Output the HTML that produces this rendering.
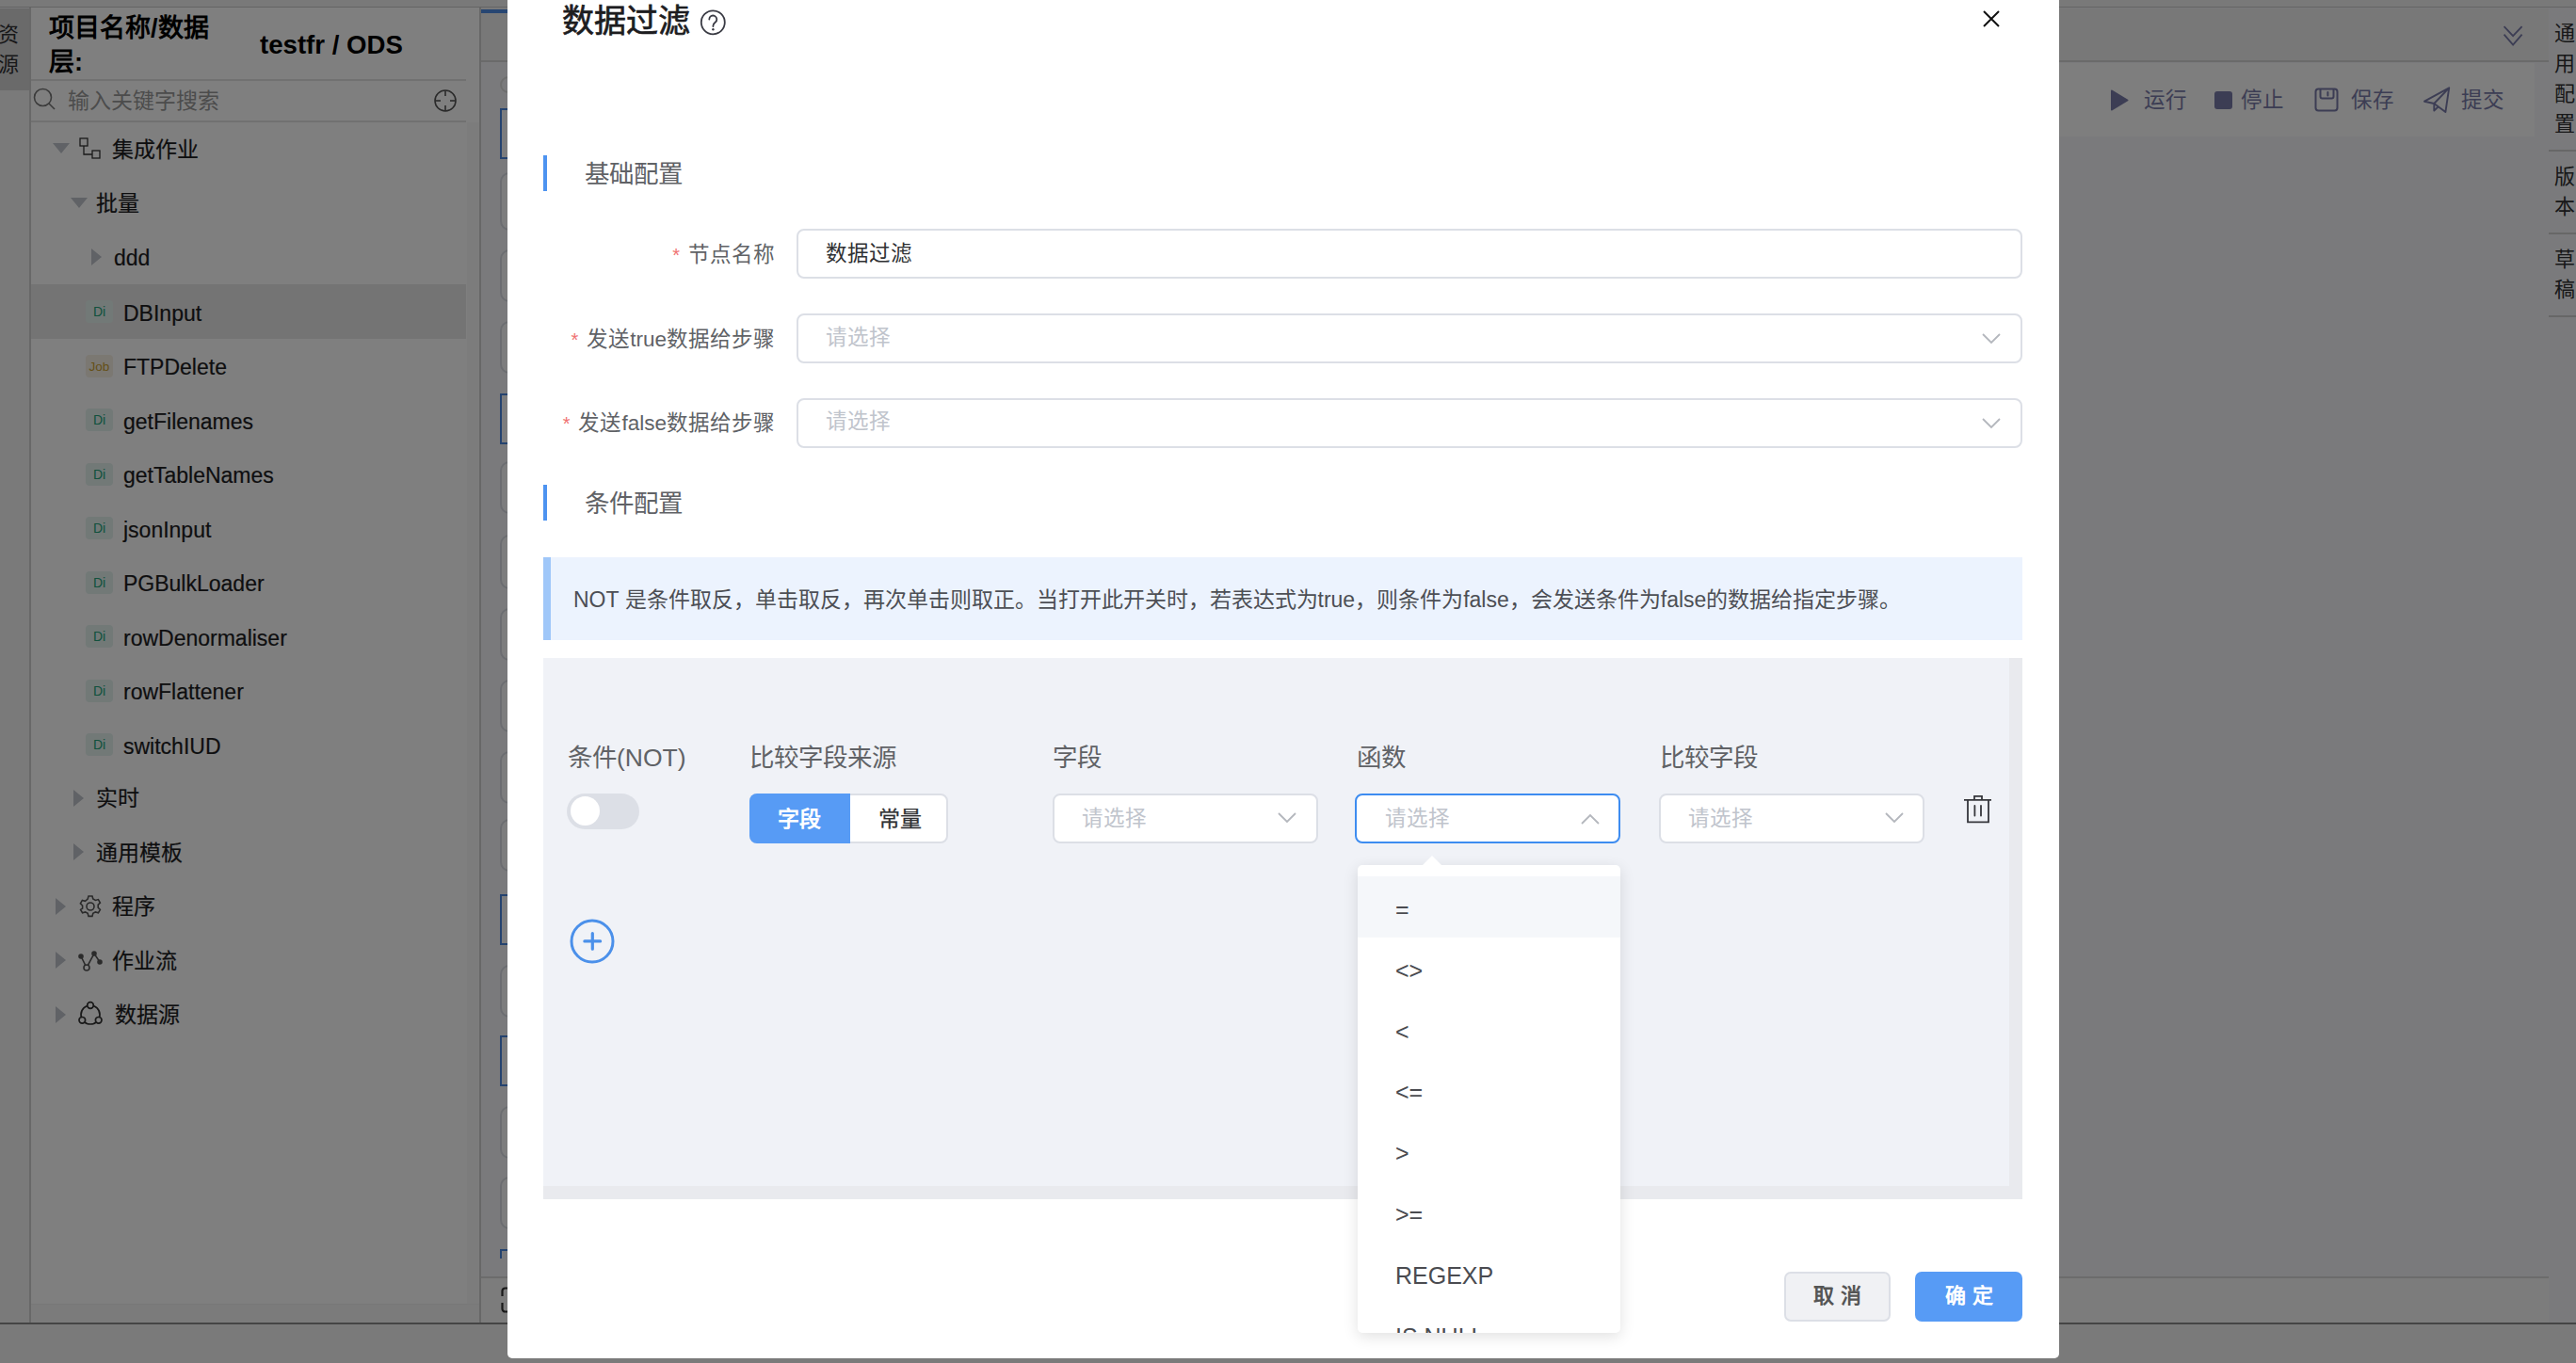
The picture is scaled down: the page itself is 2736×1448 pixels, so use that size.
<!DOCTYPE html>
<html lang="zh-CN"><head><meta charset="utf-8">
<style>
*{box-sizing:border-box;margin:0;padding:0}
html,body{width:2736px;height:1448px;overflow:hidden}
body{position:relative;font-family:"Liberation Sans",sans-serif;background:#f4f5f8;color:#303133}
.a{position:absolute;white-space:nowrap}
/* background app */
#top{left:0;top:0;width:2736px;height:8px;background:#f2f2f2;border-bottom:1px solid #c8c8c8}
#ltab{left:0;top:9px;width:31px;height:87px;background:#d4d4d4}
#lcol{left:0;top:96px;width:31px;height:1310px;background:#f4f4f4}
#side{left:31px;top:8px;width:480px;height:1398px;background:#fff;border-left:2px solid #d0d0d0;border-right:2px solid #cfcfcf}
#tree{left:33px;top:130px;width:462px;height:1257px;background:#fff}
#strack{left:496px;top:130px;width:13px;height:1276px;background:#f8f8f8}
.hl{background:#e9e9e9}
.tt{font-size:23px;line-height:30px;color:#1c1c1e;-webkit-text-stroke:0.2px #1c1c1e}
.tri{position:absolute;width:0;height:0}
.tri.d{border-left:9px solid transparent;border-right:9px solid transparent;border-top:11px solid #c0c4cc}
.tri.r{border-top:9px solid transparent;border-bottom:9px solid transparent;border-left:11px solid #c0c4cc}
.di{position:absolute;width:29px;height:24px;border-radius:4px;background:#e4f3ef;color:#22a27a;font-size:14px;line-height:25px;text-align:center}
.job{background:#f6f0e4;color:#caa030;font-size:13.5px}
#bottom{left:0;top:1405px;width:2736px;height:43px;background:#f4f4f4;border-top:2px solid #8a8a8a}
#main{left:511px;top:9px;width:2196px;height:1396px;background:#f4f5f8}
#tabbar{left:511px;top:9px;width:2196px;height:57px;background:#f1f1f1;border-bottom:2px solid #d4d4d4}
#toolbar{left:1000px;top:67px;width:1692px;height:78px;background:#fcfcfc}
#canvasb{left:511px;top:1356px;width:2196px;height:50px;background:#f8f8f8;border-top:2px solid #d8d8d8}
#rtabs{left:2707px;top:9px;width:29px;height:1396px;background:#f4f5f8}
.vt{font-size:22px;line-height:32px;color:#303133;width:30px;text-align:left}
.card{position:absolute;left:531px;width:60px;height:55px;border:2px solid #d8dbe3;border-radius:10px;background:#fafbfc}
.card.b{border-color:#4a86de;border-radius:0}
.tbt{font-size:22.5px;line-height:30px;color:#787aa8}
#overlay{left:0;top:0;width:2736px;height:1448px;background:rgba(0,0,0,.5)}
/* modal */
#modal{left:539px;top:-20px;width:1648px;height:1463px;background:#fff;border-radius:5px}
.sec{font-size:26.5px;line-height:38px;color:#606266}
.bar{position:absolute;width:4px;height:38px;background:#4d93f0}
.lbl{font-size:22.5px;line-height:30px;color:#606266;text-align:right}
.req{color:#f07272;margin-right:9px;font-size:20px}
.inp{position:absolute;left:846px;width:1302px;height:53px;border:2px solid #dcdfe6;border-radius:8px;background:#fff}
.ph{color:#c0c4cc}
.chev{position:absolute;width:20px;height:12px}
.clbl{font-size:26.5px;line-height:36px;color:#606266}
.sel{position:absolute;top:843px;width:282px;height:53px;border:2px solid #dcdfe6;border-radius:8px;background:#fff}
.it{position:absolute;left:1482px;font-size:25px;line-height:30px;color:#4a4b50}
</style></head><body>
<div class="a" id="top"></div>
<div class="a" id="ltab"></div>
<div class="a" id="lcol"></div>
<div class="a vt" style="left:-2px;top:21px;font-size:22px;line-height:32px">资<br>源</div>
<div class="a" id="side"></div>
<div class="a" id="strack"></div>
<div class="a" style="left:33px;top:1385px;width:476px;height:20px;background:#f7f7f7;border-top:1px solid #f0f0f0"></div>
<div class="a" style="left:33px;top:84px;width:462px;height:2px;background:#e2e2e2"></div>
<div class="a" style="left:33px;top:128px;width:462px;height:2px;background:#e2e2e2"></div>
<div class="a" style="left:52px;top:12px;font-size:27px;line-height:36px;font-weight:bold;color:#000">项目名称/数据<br>层:</div>
<div class="a" style="left:276px;top:30px;font-size:27.6px;line-height:36px;font-weight:bold;color:#000">testfr / ODS</div>
<!-- search -->
<svg class="a" style="left:35px;top:93px" width="26" height="26" viewBox="0 0 26 26"><circle cx="10.5" cy="10.5" r="9" fill="none" stroke="#777" stroke-width="1.6"/><line x1="17" y1="17" x2="23" y2="23" stroke="#777" stroke-width="1.6"/></svg>
<div class="a" style="left:72px;top:92px;font-size:23px;line-height:30px;color:#999">输入关键字搜索</div>
<svg class="a" style="left:460px;top:94px" width="26" height="26" viewBox="0 0 26 26"><circle cx="13" cy="13" r="11" fill="none" stroke="#555" stroke-width="1.6"/><line x1="13" y1="2" x2="13" y2="8" stroke="#555" stroke-width="1.6"/><line x1="13" y1="18" x2="13" y2="24" stroke="#555" stroke-width="1.6"/><line x1="2" y1="13" x2="8" y2="13" stroke="#555" stroke-width="1.6"/><line x1="18" y1="13" x2="24" y2="13" stroke="#555" stroke-width="1.6"/></svg>
<!-- tree -->
<div class="a hl" style="left:33px;top:302px;width:462px;height:58px"></div>
<div class="tri d" style="left:56px;top:152px"></div>
<svg class="a" style="left:84px;top:146px" width="24" height="25" viewBox="0 0 24 25" fill="none" stroke="#333" stroke-width="1.3"><rect x="1" y="1" width="8" height="8"/><rect x="14" y="14" width="8" height="8"/><path d="M5 9v9h9"/></svg>
<div class="a tt" style="left:119px;top:144px">集成作业</div>
<div class="tri d" style="left:75px;top:210px"></div>
<div class="a tt" style="left:102px;top:201px">批量</div>
<div class="tri r" style="left:97px;top:264px"></div>
<div class="a tt" style="left:121px;top:259px">ddd</div>
<div class="di" style="left:91px;top:319px">Di</div><div class="a tt" style="left:131px;top:317.5px">DBInput</div>
<div class="di job" style="left:91px;top:377px">Job</div><div class="a tt" style="left:131px;top:374.5px">FTPDelete</div>
<div class="di" style="left:91px;top:434px">Di</div><div class="a tt" style="left:131px;top:432.5px">getFilenames</div>
<div class="di" style="left:91px;top:492px">Di</div><div class="a tt" style="left:131px;top:489.5px">getTableNames</div>
<div class="di" style="left:91px;top:549px">Di</div><div class="a tt" style="left:131px;top:547.5px">jsonInput</div>
<div class="di" style="left:91px;top:607px">Di</div><div class="a tt" style="left:131px;top:604.5px">PGBulkLoader</div>
<div class="di" style="left:91px;top:664px">Di</div><div class="a tt" style="left:131px;top:662.5px">rowDenormaliser</div>
<div class="di" style="left:91px;top:722px">Di</div><div class="a tt" style="left:131px;top:719.5px">rowFlattener</div>
<div class="di" style="left:91px;top:779px">Di</div><div class="a tt" style="left:131px;top:777.5px">switchIUD</div>
<div class="tri r" style="left:78px;top:839px"></div>
<div class="a tt" style="left:102px;top:833px">实时</div>
<div class="tri r" style="left:78px;top:896px"></div>
<div class="a tt" style="left:102px;top:891px">通用模板</div>
<div class="tri r" style="left:59px;top:954px"></div>
<svg class="a" style="left:83px;top:950px" width="26" height="26" viewBox="0 0 26 26" fill="none" stroke="#555" stroke-width="1.6"><circle cx="13" cy="13" r="4"/><path d="M11 2h4l.8 3 2.6 1.5 3-.9 2 3.4-2.2 2.2v3l2.2 2.2-2 3.4-3-.9-2.6 1.5-.8 3h-4l-.8-3-2.6-1.5-3 .9-2-3.4L4.6 15v-3L2.4 9.8l2-3.4 3 .9L10.2 5z"/></svg>
<div class="a tt" style="left:119px;top:948px">程序</div>
<div class="tri r" style="left:59px;top:1011px"></div>
<svg class="a" style="left:83px;top:1010px" width="26" height="24" viewBox="0 0 26 24" fill="none" stroke="#555" stroke-width="1.6"><path d="M3 6l6 12 8-15 6 9"/><circle cx="3" cy="6" r="2" fill="#555"/><circle cx="9" cy="18" r="3" fill="#fff"/><circle cx="17" cy="3" r="2" fill="#555"/><circle cx="23" cy="12" r="2" fill="#555"/></svg>
<div class="a tt" style="left:119px;top:1006px">作业流</div>
<div class="tri r" style="left:59px;top:1069px"></div>
<svg class="a" style="left:83px;top:1062px" width="28" height="30" viewBox="0 0 28 30" fill="none" stroke="#333" stroke-width="1.7"><circle cx="13" cy="16" r="10"/><circle cx="13" cy="6" r="3.3" fill="#fff"/><circle cx="4.3" cy="21.8" r="3.3" fill="#fff"/><circle cx="21.7" cy="21.8" r="3.3" fill="#fff"/></svg>
<div class="a tt" style="left:122px;top:1063px">数据源</div>

<!-- main background -->
<div class="a" id="main"></div>
<div class="a" id="tabbar"></div>
<div class="a" style="left:511px;top:10px;width:200px;height:4px;background:#4e8ce4"></div>
<div class="a" id="toolbar"></div>
<div class="card b" style="top:115px;height:54px"></div>
<div class="card" style="top:183px;height:62px"></div>
<div class="card" style="top:265px;height:56px"></div>
<div class="card" style="top:341px;height:56px"></div>
<div class="card b" style="top:418px;height:54px"></div>
<div class="card" style="top:490px;height:56px"></div>
<div class="card" style="top:568px;height:58px"></div>
<div class="card" style="top:646px;height:56px"></div>
<div class="card" style="top:722px;height:56px"></div>
<div class="card" style="top:798px;height:56px"></div>
<div class="card" style="top:870px;height:56px"></div>
<div class="card b" style="top:950px;height:54px"></div>
<div class="card" style="top:1025px;height:56px"></div>
<div class="card b" style="top:1100px;height:54px"></div>
<div class="card" style="top:1175px;height:56px"></div>
<div class="card" style="top:1250px;height:56px"></div>
<div class="a" style="left:531px;top:1327px;width:10px;height:10px;border-left:2px solid #4a86de;border-top:2px solid #4a86de"></div>
<div class="a" id="canvasb"></div>
<svg class="a" style="left:528px;top:80px" width="12" height="20" viewBox="0 0 12 20"><circle cx="12" cy="10" r="8" fill="none" stroke="#dcdcdc" stroke-width="2"/></svg>
<svg class="a" style="left:532px;top:1367px" width="8" height="28" viewBox="0 0 8 28" fill="none" stroke="#333" stroke-width="2.2"><path d="M8 1.5H4.5a3 3 0 0 0-3 3V10M1.5 17v6.5a3 3 0 0 0 3 3H8"/></svg>
<svg class="a" style="left:2657px;top:26px" width="24" height="24" viewBox="0 0 24 24" fill="none" stroke="#787aa8" stroke-width="1.8"><path d="M2.6 2.2l9.5 9.9 9.5-9.9M2.6 10.6l9.5 11.1 9.5-11.1"/></svg>
<svg class="a" style="left:2241px;top:95px" width="20" height="23" viewBox="0 0 20 23"><path d="M1 1.5v20a1 1 0 0 0 1.5.8L19 12.3a1 1 0 0 0 0-1.6L2.5.7A1 1 0 0 0 1 1.5z" fill="#787aa8"/></svg>
<div class="a tbt" style="left:2277px;top:92px">运行</div>
<div class="a" style="left:2352px;top:97px;width:19px;height:19px;border-radius:3px;background:#787aa8"></div>
<div class="a tbt" style="left:2380px;top:92px">停止</div>
<svg class="a" style="left:2458px;top:93px" width="26" height="26" viewBox="0 0 26 26" fill="none" stroke="#787aa8" stroke-width="2"><rect x="1.5" y="1.5" width="23" height="23" rx="3"/><path d="M6.5 2v7.5a2 2 0 0 0 2 2h10a2 2 0 0 0 2-2V2M14.4 5v3.5" stroke-linecap="round"/></svg>
<div class="a tbt" style="left:2497px;top:92px">保存</div>
<svg class="a" style="left:2574px;top:92px" width="29" height="29" viewBox="0 0 29 29" fill="none" stroke="#787aa8" stroke-width="1.9" stroke-linejoin="round"><path d="M1 15.7L27.2 1.3L23.4 27L11.3 18Z M11.3 18V25.6L15.5 21.5 M11.3 18L27.2 1.3"/></svg>
<div class="a tbt" style="left:2614px;top:92px">提交</div>
<div class="a" id="rtabs"></div>
<div class="a vt" style="left:2713px;top:20px">通<br>用<br>配<br>置</div>
<div class="a" style="left:2707px;top:159px;width:29px;height:2px;background:#cfcfcf"></div>
<div class="a vt" style="left:2713px;top:172px">版<br>本</div>
<div class="a" style="left:2707px;top:247px;width:29px;height:2px;background:#cfcfcf"></div>
<div class="a vt" style="left:2713px;top:260px">草<br>稿</div>
<div class="a" style="left:2707px;top:335px;width:29px;height:2px;background:#cfcfcf"></div>
<div class="a" id="bottom"></div>

<div class="a" id="overlay"></div>

<!-- modal -->
<div class="a" id="modal"></div>
<div class="a" style="left:597px;top:2px;font-size:34px;line-height:40px;color:#1d1d1f;-webkit-text-stroke:0.7px #1d1d1f">数据过滤</div>
<svg class="a" style="left:743px;top:9.5px" width="28" height="28" viewBox="0 0 28 28" fill="none" stroke="#3a3b44" stroke-width="1.8"><circle cx="14.3" cy="13.8" r="12.5"/><path d="M10.3 10.5a4 4 0 1 1 6.3 3.3c-1 .8-2.2 1.8-2.2 3.6v.6" stroke-linecap="round"/><circle cx="14.4" cy="21.2" r="1.2" fill="#3a3b44" stroke="none"/></svg>
<svg class="a" style="left:2106px;top:11px" width="18" height="18" viewBox="0 0 18 18" stroke="#111" stroke-width="2"><path d="M1 1l16 16M17 1L1 17"/></svg>

<div class="bar" style="left:577px;top:165px"></div>
<div class="a sec" style="left:621px;top:166px">基础配置</div>

<div class="a lbl" style="left:563px;top:255.5px;width:260px"><span class="req">*</span>节点名称</div>
<div class="inp" style="top:243px"></div>
<div class="a" style="left:877px;top:255px;font-size:22.5px;line-height:30px;color:#303133">数据过滤</div>

<div class="a lbl" style="left:563px;top:345.5px;width:260px"><span class="req">*</span>发送true数据给步骤</div>
<div class="inp" style="top:333px"></div>
<div class="a ph" style="left:877px;top:344px;font-size:22.5px;line-height:30px">请选择</div>
<svg class="chev" style="left:2105px;top:354px" viewBox="0 0 20 12" fill="none" stroke="#b4b7bd" stroke-width="1.8"><path d="M1 1l9 9 9-9"/></svg>

<div class="a lbl" style="left:563px;top:434.5px;width:260px"><span class="req">*</span>发送false数据给步骤</div>
<div class="inp" style="top:423px"></div>
<div class="a ph" style="left:877px;top:433px;font-size:22.5px;line-height:30px">请选择</div>
<svg class="chev" style="left:2105px;top:444px" viewBox="0 0 20 12" fill="none" stroke="#b4b7bd" stroke-width="1.8"><path d="M1 1l9 9 9-9"/></svg>

<div class="bar" style="left:577px;top:515px"></div>
<div class="a sec" style="left:621px;top:516px">条件配置</div>

<div class="a" style="left:577px;top:592px;width:1571px;height:88px;background:#ecf3fe;border-left:8px solid #9fc7f9"></div>
<div class="a" style="left:609px;top:622px;font-size:23px;line-height:30px;color:#4d4f55">NOT 是条件取反，单击取反，再次单击则取正。当打开此开关时，若表达式为true，则条件为false，会发送条件为false的数据给指定步骤。</div>

<div class="a" style="left:577px;top:699px;width:1571px;height:575px;background:#e9eaee"></div>
<div class="a" style="left:577px;top:699px;width:1557px;height:561px;background:#f0f2f7"></div>

<div class="a clbl" style="left:603px;top:787px">条件(NOT)</div>
<div class="a clbl" style="left:796px;top:787px">比较字段来源</div>
<div class="a clbl" style="left:1118px;top:787px">字段</div>
<div class="a clbl" style="left:1441px;top:787px">函数</div>
<div class="a clbl" style="left:1763px;top:787px">比较字段</div>

<div class="a" style="left:602px;top:843px;width:77px;height:38px;border-radius:19px;background:#dcdfe6"></div>
<div class="a" style="left:606px;top:846px;width:31px;height:31px;border-radius:50%;background:#fff"></div>

<div class="a" style="left:796px;top:843px;width:211px;height:53px;border-radius:8px;background:#fff;border:2px solid #dcdfe6"></div>
<div class="a" style="left:796px;top:843px;width:107px;height:53px;border-radius:8px 0 0 8px;background:#579bf5"></div>
<div class="a" style="left:826px;top:855px;font-size:23px;line-height:30px;color:#fff;font-weight:bold">字段</div>
<div class="a" style="left:933px;top:855px;font-size:23px;line-height:30px;color:#303133;-webkit-text-stroke:0.25px #303133">常量</div>

<div class="sel" style="left:1118px"></div>
<div class="a ph" style="left:1149px;top:855px;font-size:22.5px;line-height:30px">请选择</div>
<svg class="chev" style="left:1357px;top:863px" viewBox="0 0 20 12" fill="none" stroke="#b4b7bd" stroke-width="1.8"><path d="M1 1l9 9 9-9"/></svg>

<div class="sel" style="left:1439px;border-color:#3d8cf0"></div>
<div class="a ph" style="left:1471px;top:855px;font-size:22.5px;line-height:30px">请选择</div>
<svg class="chev" style="left:1679px;top:864px" viewBox="0 0 20 12" fill="none" stroke="#b4b7bd" stroke-width="1.8"><path d="M1 11l9-9 9 9"/></svg>

<div class="sel" style="left:1762px"></div>
<div class="a ph" style="left:1793px;top:855px;font-size:22.5px;line-height:30px">请选择</div>
<svg class="chev" style="left:2002px;top:863px" viewBox="0 0 20 12" fill="none" stroke="#b4b7bd" stroke-width="1.8"><path d="M1 1l9 9 9-9"/></svg>

<svg class="a" style="left:2085px;top:844px" width="32" height="32" viewBox="0 0 32 32" fill="none" stroke="#36373c" stroke-width="1.8"><path d="M1 5.8h29M12 5.8V1.8h8v4M5 5.8v23.5h22V5.8"/><path d="M12.4 12v10.5M19 12v10.5" stroke-linecap="round"/></svg>

<svg class="a" style="left:605px;top:976px" width="48" height="48" viewBox="0 0 48 48" fill="none" stroke="#4b90ea" stroke-width="3" stroke-linecap="round"><circle cx="24" cy="24" r="22"/><path d="M24.3 15.6V32.2M15.9 23.9H32.6" stroke-width="3.2"/></svg>

<!-- dropdown -->
<div class="a" style="left:1442px;top:919px;width:279px;height:497px;background:#fff;border-radius:5px;box-shadow:0 4px 16px rgba(0,0,0,.12);overflow:hidden">
  <div style="position:absolute;left:0;top:12px;width:279px;height:65px;background:#f5f7fa"></div>
</div>
<svg class="a" style="left:1509px;top:909px" width="24" height="12" viewBox="0 0 24 12"><path d="M0 12L12 0l12 12z" fill="#fff"/></svg>
<div class="a" style="left:1442px;top:919px;width:279px;height:497px;overflow:hidden">
<div class="it" style="left:40px;top:32.0px">=</div>
<div class="it" style="left:40px;top:96.8px">&lt;&gt;</div>
<div class="it" style="left:40px;top:161.6px">&lt;</div>
<div class="it" style="left:40px;top:226.4px">&lt;=</div>
<div class="it" style="left:40px;top:291.2px">&gt;</div>
<div class="it" style="left:40px;top:356.0px">&gt;=</div>
<div class="it" style="left:40px;top:420.8px">REGEXP</div>
<div class="it" style="left:40px;top:485.6px">IS NULL</div>
</div>

<div class="a" style="left:1895px;top:1351px;width:113px;height:53px;border-radius:7px;background:#f0f1f4;border:2px solid #dcdfe6"></div>
<div class="a" style="left:1895px;top:1362px;width:113px;text-align:center;font-size:22px;line-height:30px;color:#555;font-weight:bold;letter-spacing:7px;text-indent:7px">取消</div>
<div class="a" style="left:2034px;top:1351px;width:114px;height:53px;border-radius:7px;background:#579bf5"></div>
<div class="a" style="left:2034px;top:1362px;width:114px;text-align:center;font-size:22px;line-height:30px;color:#fff;font-weight:bold;letter-spacing:7px;text-indent:7px">确定</div>
</body></html>
